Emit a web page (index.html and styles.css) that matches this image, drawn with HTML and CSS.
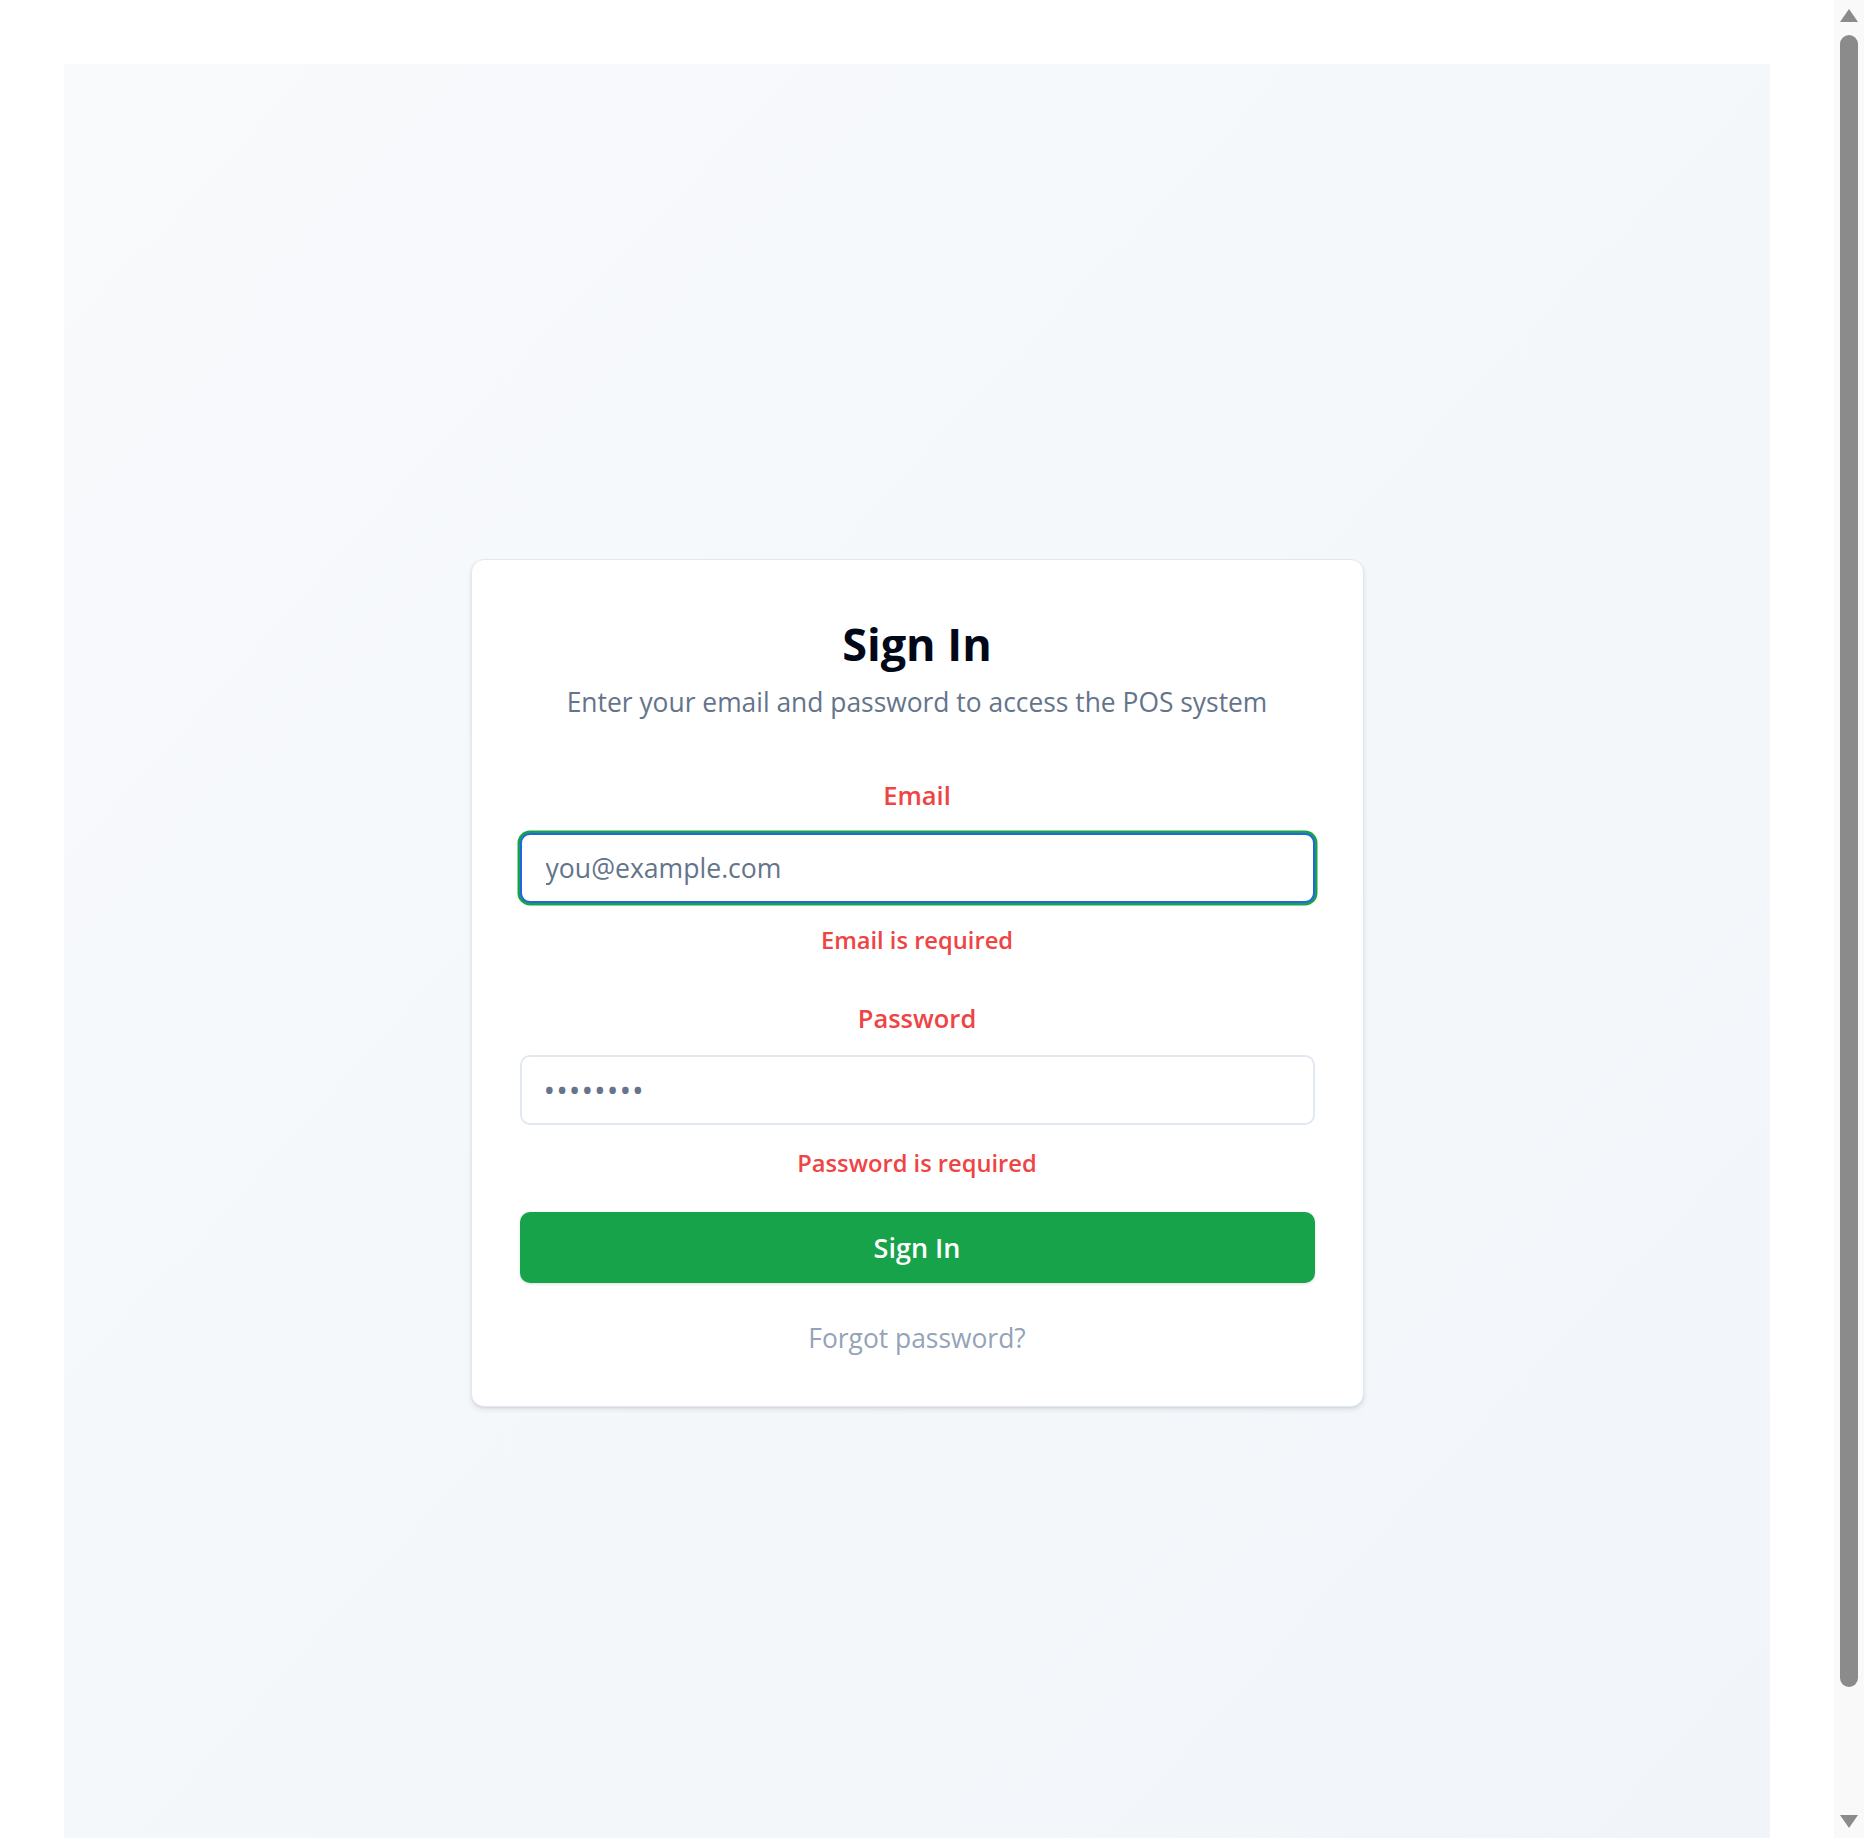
FILE: index.html
```html
<!DOCTYPE html>
<html lang="en">
<head>
<meta charset="utf-8">
<title>Sign In</title>
<link rel="stylesheet" href="styles.css">
</head>
<body>
<div class="page">
  <main class="screen">
    <section class="card">
      <h1 class="title">Sign In</h1>
      <p class="subtitle">Enter your email and password to access the POS system</p>
      <form class="form">
        <div class="field">
          <label class="label" for="email">Email</label>
          <input class="input input-focus" id="email" type="email" placeholder="you@example.com">
          <p class="error">Email is required</p>
        </div>
        <div class="field field-second">
          <label class="label" for="password">Password</label>
          <input class="input input-password" id="password" type="password" value="12345678">
          <p class="error">Password is required</p>
        </div>
        <button class="button" type="button">Sign In</button>
        <a class="forgot" href="#">Forgot password?</a>
      </form>
    </section>
  </main>
</div>
<div class="scrollbar" aria-hidden="true">
  <div class="arrow arrow-up"></div>
  <div class="thumb"></div>
  <div class="arrow arrow-down"></div>
</div>
</body>
</html>
```
FILE: styles.css
```css
html, body {
  margin: 0;
  padding: 0;
  background: #ffffff;
}

body {
  display: flex;
  align-items: flex-start;
  font-family: "Open Sans", "Noto Sans", sans-serif;
  color: #020817;
}

.page {
  flex: 1;
  min-width: 0;
  padding: 64px;
}

.scrollbar {
  position: sticky;
  top: 0;
  flex: 0 0 30px;
  width: 30px;
  height: 100vh;
  box-sizing: border-box;
  background: #f9f9f9;
  display: flex;
  flex-direction: column;
  align-items: center;
  padding: 9px 0 10px;
}

.arrow {
  width: 0;
  height: 0;
  border-left: 9.5px solid transparent;
  border-right: 9.5px solid transparent;
}

.arrow-up {
  border-bottom: 13px solid #8b8b8b;
}

.arrow-down {
  margin-top: auto;
  border-top: 13px solid #8b8b8b;
}

.thumb {
  margin-top: 13px;
  width: 18px;
  height: 1652px;
  border-radius: 9px;
  background: #8b8b8b;
}

.screen {
  min-height: 100vh;
  box-sizing: border-box;
  display: flex;
  align-items: center;
  justify-content: center;
  background: linear-gradient(to bottom right, #f8fafc, #f1f5f9);
}

.card {
  box-sizing: border-box;
  width: 893px;
  padding: 48px;
  background: #ffffff;
  border: 1px solid #e2e8f0;
  border-radius: 13px;
  box-shadow: 0 3px 5px rgba(15, 23, 42, 0.09), 0 1px 2px rgba(15, 23, 42, 0.06);
  text-align: center;
}

.title {
  margin: 0;
  font-size: 45px;
  line-height: 72px;
  font-weight: 700;
  color: #020817;
}

.subtitle {
  margin: 2px 0 0;
  font-size: 26.4px;
  line-height: 40px;
  color: #64748b;
}

.form {
  margin-top: 53px;
  display: flex;
  flex-direction: column;
}

.field {
  display: flex;
  flex-direction: column;
}

.field-second {
  margin-top: 40px;
}

.label {
  font-size: 25.5px;
  line-height: 40px;
  font-weight: 600;
  color: #ef4444;
}

.input {
  box-sizing: border-box;
  margin-top: 18px;
  height: 70px;
  width: 100%;
  padding: 0 24px;
  border: 2px solid #e2e8f0;
  border-radius: 10px;
  background: #ffffff;
  font-family: "Open Sans", "Noto Sans", sans-serif;
  font-size: 26.6px;
  color: #64748b;
  outline: none;
}

.input::placeholder {
  color: #64748b;
}

.input-focus {
  border-color: #2563eb;
  box-shadow: 0 0 0 2.5px #16a34a;
}

.input-password {
  font-size: 31px;
  letter-spacing: 1px;
  padding-left: 22px;
}

.error {
  margin: 19px 0 0;
  font-size: 23.7px;
  line-height: 36px;
  font-weight: 600;
  color: #ef4444;
}

.field-second .input {
  margin-top: 17px;
}

.field-second .error {
  margin-top: 20px;
}

.button {
  margin-top: 31px;
  height: 71px;
  border: none;
  border-radius: 10px;
  background: #16a34a;
  color: #ffffff;
  font-family: "Open Sans", "Noto Sans", sans-serif;
  font-size: 27px;
  font-weight: 600;
  box-shadow: 0 1px 3px rgba(15, 23, 42, 0.14);
  cursor: pointer;
}

.forgot {
  margin-top: 35px;
  font-size: 26.4px;
  line-height: 40px;
  color: #94a3b8;
  text-decoration: none;
}
```
